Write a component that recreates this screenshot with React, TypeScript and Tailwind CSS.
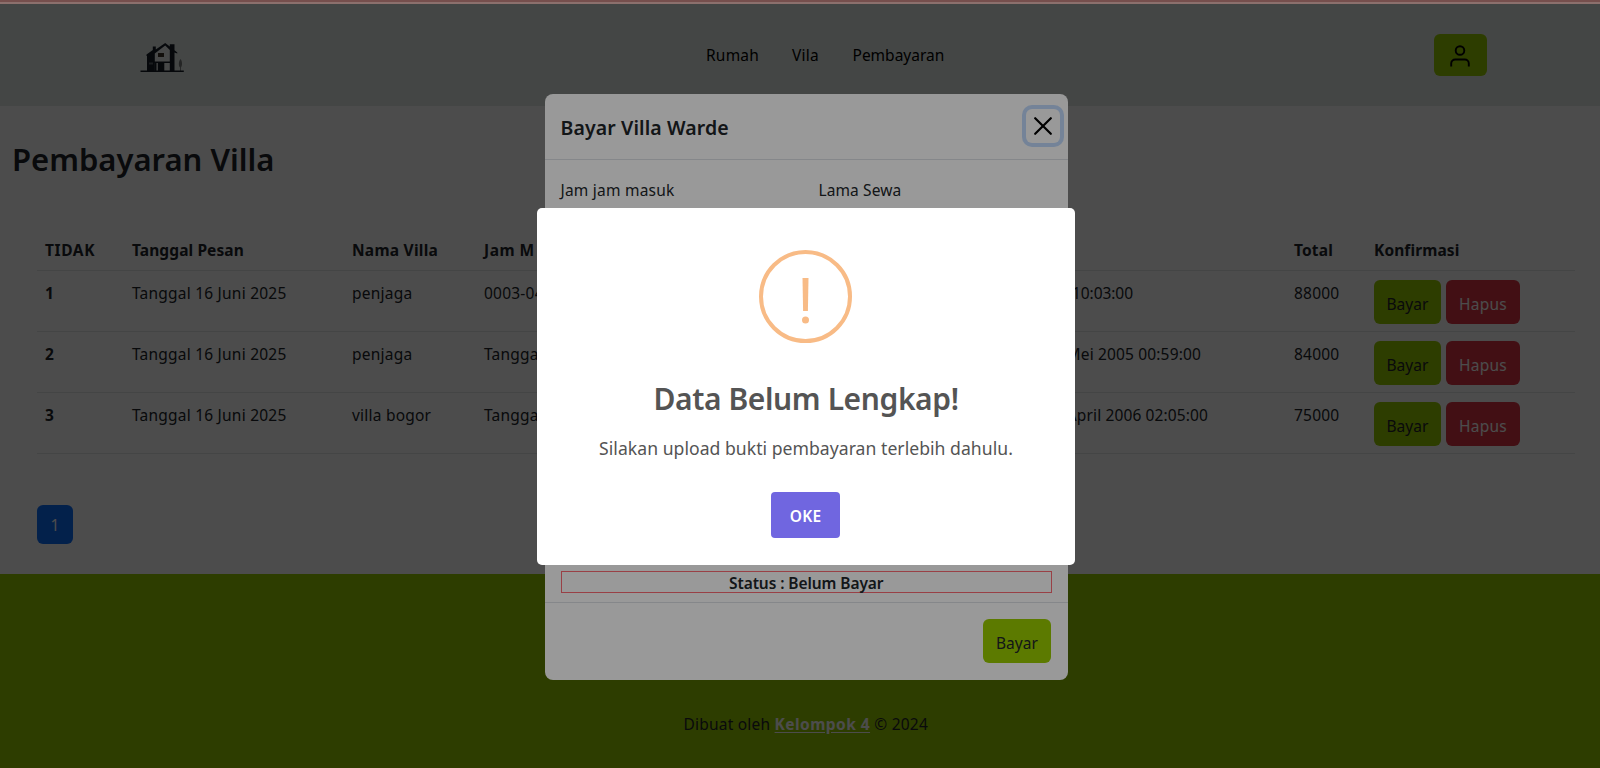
import type { ReactNode } from "react";

const rows = [
  { no: "1", name: "penjaga", start: "0003-04", end: "10:03:00", endWidth: "w-[150px] tracking-[-0.050px]", total: "88000" },
  { no: "2", name: "penjaga", start: "Tanggal", end: "Mei 2005 00:59:00", endWidth: "w-[218px] tracking-[0.150px]", total: "84000" },
  { no: "3", name: "villa bogor", start: "Tanggal", end: "April 2006 02:05:00", endWidth: "w-[225px] tracking-[0.120px]", total: "75000" },
];

const cols = "grid grid-cols-[87px_220px_132px_499px_311px_80px_1fr]";

function HouseLogo() {
  return (
    <svg width="46" height="32" viewBox="0 0 46 32" fill="none">
      <path d="M14.500 11 25 3l6 5v20.500H14.500Z" fill="#fff" fillOpacity=".4" />
      <path d="M6.500 14v-1.500L12.800 8V4.500h3V7.500L25.200 1l4.600 3.500V2.300h4.700v6l2.800 2.200v1l-2.800-.9V29h-4.700V8L25.200 3.500 14.800 11.500V29H7V14Z" fill="#151d27" />
      <path d="M18 11h6v4h-6Z" fill="#3d3229" />
      <path d="M14 19.500h16V21H14Z" fill="#151d27" />
      <path d="M14.500 21h2v8h-2ZM17.800 21h6.500v8h-6.500Z" fill="#151d27" />
      <path d="M9 20.500h4v2H9Z" fill="#5d6268" />
      <path d="M40.500 17c2 2 2 7 .4 8.500V29h-.9v-3.500c-1.600-1.500-1.500-6.500.5-8.500Z" fill="#7a7e7c" />
      <path d="M.5 28.500h43.300V30H.5Z" fill="#151d27" />
    </svg>
  );
}

function ActionButton({ className, children }: { className: string; children: ReactNode }) {
  return (
    <button className={`flex h-[43.5px] items-start justify-center rounded-md pt-[12px] leading-6 ${className}`}>
      {children}
    </button>
  );
}

export default function App() {
  return (
    <div className="relative h-[768px] w-full overflow-hidden bg-white font-['Noto_Sans','Segoe_UI',sans-serif] text-[15.5px] leading-6 tracking-[0.22px] text-[#212529]">
      <div className="flex h-full flex-col">
        <header className="flex h-[106px] shrink-0 items-start bg-[#e5ebe8] pt-[33.500px]">
          <div className="w-[706px] pl-[139.500px] pt-[8px]">
            <HouseLogo />
          </div>
          <nav className="flex w-[728px] pt-[9px] text-black">
            <a className="w-[86px]">Rumah</a>
            <a className="w-[60.500px]">Vila</a>
            <a className="tracking-[0px]">Pembayaran</a>
          </nav>
          <button className="flex h-[42px] w-[52.500px] items-center justify-center rounded-md bg-[#99cc00]">
            <svg width="20" height="22" viewBox="0 0 20 22" fill="none" stroke="#000" strokeWidth="1.900" className="mt-[3px]">
              <circle cx="10" cy="5.500" r="4.300" />
              <path d="M1.200 21.500v-3a4 4 0 0 1 4-4h9.600a4 4 0 0 1 4 4v3" />
            </svg>
          </button>
        </header>

        <main className="flex h-[468px] shrink-0 flex-col">
          <h1 className="pl-[12px] pt-[34px] text-[31px] font-semibold leading-[38px] tracking-[0px]">Pembayaran Villa</h1>

          <section className="ml-[37px] mr-[25px] mt-[53px]">
            <div className={`${cols} h-[40px] border-b border-[#e4e6e8] pt-[7px] font-bold *:px-2`}>
              <div className="tracking-[0.600px]">TIDAK</div>
              <div className="tracking-[0.100px]">Tanggal Pesan</div>
              <div className="tracking-[0.250px]">Nama Villa</div>
              <div className="tracking-[0.500px]">Jam M</div>
              <div />
              <div className="tracking-[0.150px]">Total</div>
              <div className="tracking-[0.100px]">Konfirmasi</div>
            </div>
            {rows.map((r) => (
              <div key={r.no} className={`${cols} h-[61.100px] border-b border-[#e4e6e8] pt-[10px] *:px-2`}>
                <div className="font-bold">{r.no}</div>
                <div>Tanggal 16 Juni 2025</div>
                <div>{r.name}</div>
                <div>{r.start}</div>
                <div>
                  <div className={`text-right ${r.endWidth}`}>{r.end}</div>
                </div>
                <div>{r.total}</div>
                <div className="-mt-[1px] flex gap-[5px]">
                  <ActionButton className="w-[67px] bg-[#99cc00] tracking-[0.050px]">Bayar</ActionButton>
                  <ActionButton className="w-[74px] bg-[#dc3545] text-white">Hapus</ActionButton>
                </div>
              </div>
            ))}
          </section>

          <div className="ml-[37px] mt-[50.500px] flex h-[39.500px] w-[36px] items-center justify-center rounded-md bg-[#0d6efd] pt-px text-white">1</div>
        </main>

        <footer className="grow bg-[#99cc00] pt-[138px] text-center">
          <p className="pl-[11.500px]">
            Dibuat oleh <a className="font-bold tracking-[0.450px] text-white underline underline-offset-2">Kelompok 4</a> © 2024
          </p>
        </footer>
      </div>

      <div className="absolute inset-0 flex items-start justify-center bg-black/50 pl-[12.500px] pt-[94px]">
        <div className="flex h-[586px] w-[523.500px] flex-col rounded-lg bg-white">
          <div className="flex h-[65.500px] shrink-0 items-start justify-between border-b border-[#dee2e6] pl-4 pr-[8.500px] pt-[15px]">
            <h2 className="pt-[4px] text-[19.500px] font-semibold leading-[30px] tracking-[0.100px]">Bayar Villa Warde</h2>
            <button className="flex size-[34px] items-center justify-center rounded-md ring-4 ring-[#0d6efd]/25">
              <svg width="18" height="18" viewBox="0 0 18 18" stroke="#000" strokeWidth="2.200" strokeLinecap="round">
                <path d="M1.200 1.200l15.600 15.600M16.800 1.200l-15.600 15.600" />
              </svg>
            </button>
          </div>
          <div className="flex grow flex-col justify-between px-4 pb-[9px] pt-[18px]">
            <div className="grid grid-cols-[258px_1fr]">
              <div>Jam jam masuk</div>
              <div className="tracking-[0.100px]">Lama Sewa</div>
            </div>
            <div className="h-[22px] border border-[#ff6b76] text-center font-semibold leading-[22px] tracking-[-0.080px]">Status : Belum Bayar</div>
          </div>
          <div className="flex h-[78px] shrink-0 justify-end border-t border-[#dee2e6] pr-[17px] pt-4">
            <ActionButton className="w-[68px] bg-[#99cc00] tracking-[0.050px]">Bayar</ActionButton>
          </div>
        </div>
      </div>

      <div className="absolute inset-0 flex items-start justify-center bg-black/40 pl-[12px] pt-[208px]">
        <div className="flex h-[356.500px] w-[537.500px] flex-col items-center rounded-[5px] bg-white text-[#545454]">
          <svg width="93" height="93" viewBox="0 0 93 93" className="mr-px mt-[42px]">
            <circle cx="46.500" cy="46.500" r="44.500" fill="none" stroke="#f8bb86" strokeWidth="4" />
            <path d="M43.500 28h6l-.6 33h-4.800Z" fill="#f8bb86" />
            <circle cx="46.500" cy="70" r="3.500" fill="#f8bb86" />
          </svg>
          <h2 className="mt-[33px] text-[30px] font-semibold leading-[46px] tracking-[-0.400px]">Data Belum Lengkap!</h2>
          <p className="mt-[13px] text-[17.600px] leading-[27px] tracking-[0.030px]">Silakan upload bukti pembayaran terlebih dahulu.</p>
          <button className="mr-px mt-[30px] h-[46px] w-[69px] rounded-[4px] bg-[#7066e0] pt-[2px] font-semibold text-white">OKE</button>
        </div>
      </div>

      <div className="absolute inset-x-0 top-0 h-[4px] border-b-[2px] border-[#8c706d] bg-[#764f4d]" />
    </div>
  );
}
